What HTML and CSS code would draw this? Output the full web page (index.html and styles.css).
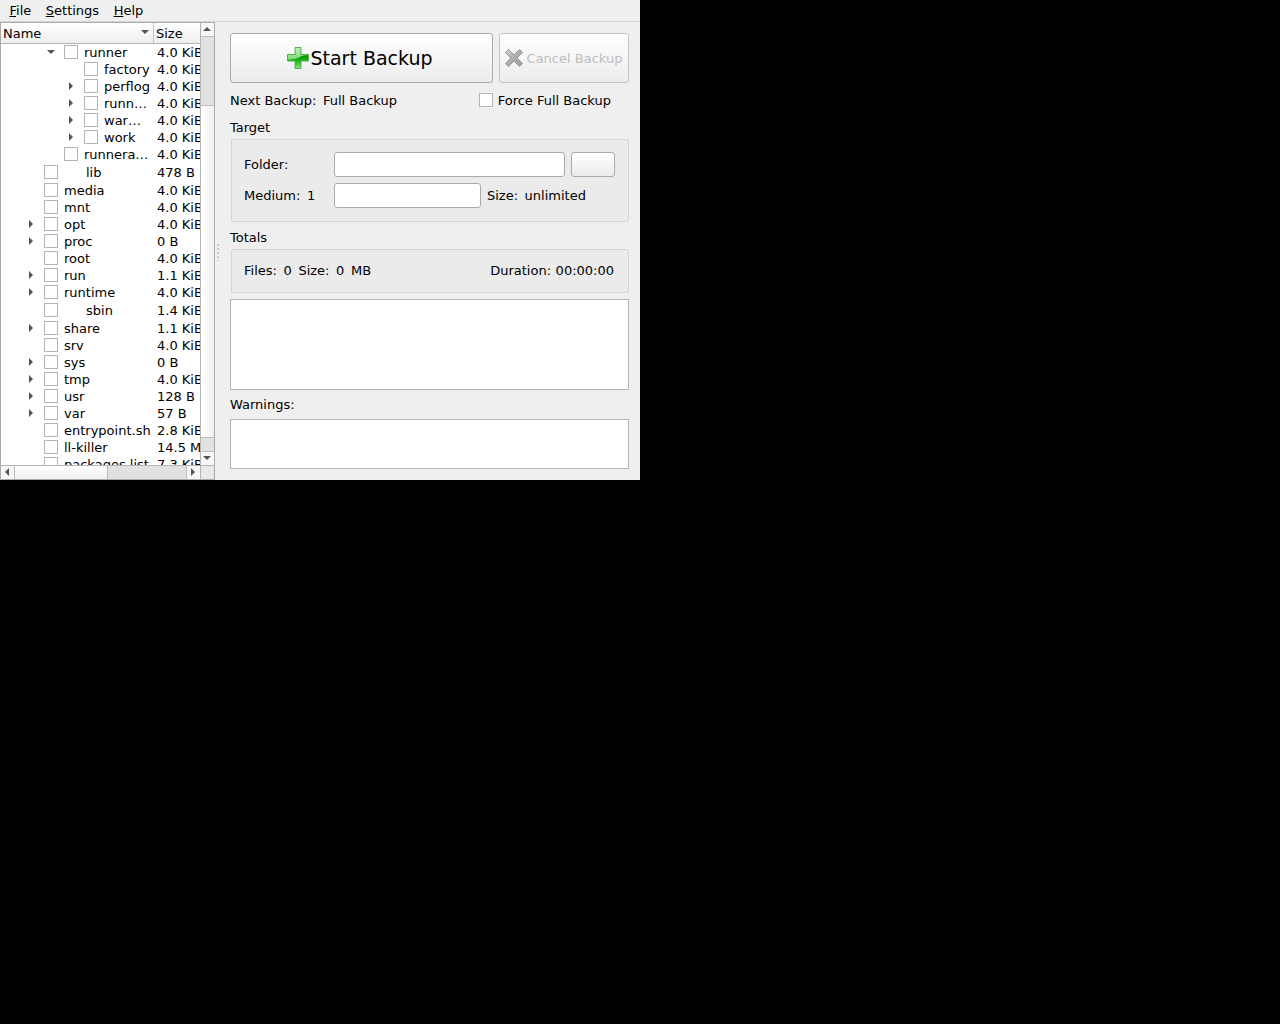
FILE: index.html
```html
<!DOCTYPE html>
<html lang="en">
<head>
<meta charset="utf-8">
<title>Backup</title>
<link rel="stylesheet" href="styles.css">
</head>
<body>
<div class="window">
  <nav class="menubar"><span><u>F</u>ile</span><span><u>S</u>ettings</span><span><u>H</u>elp</span></nav>
  <div class="main">
    <section class="tree">
      <div class="tree-body">
        <div class="list">
          <div class="head"><div class="h-name">Name<i class="tri down sort"></i></div><div class="h-size">Size</div></div>
          <div class="rows">
            <div class="row d2"><i class="tri down"></i><b class="check"></b><span class="name">runner</span><span class="size">4.0 KiB</span></div>
            <div class="row d3"><i class="tri none"></i><b class="check"></b><span class="name">factory</span><span class="size">4.0 KiB</span></div>
            <div class="row d3"><i class="tri right"></i><b class="check"></b><span class="name">perflog</span><span class="size">4.0 KiB</span></div>
            <div class="row d3"><i class="tri right"></i><b class="check"></b><span class="name">runn…</span><span class="size">4.0 KiB</span></div>
            <div class="row d3"><i class="tri right"></i><b class="check"></b><span class="name">war…</span><span class="size">4.0 KiB</span></div>
            <div class="row d3"><i class="tri right"></i><b class="check"></b><span class="name">work</span><span class="size">4.0 KiB</span></div>
            <div class="row d2"><i class="tri none"></i><b class="check"></b><span class="name">runnera…</span><span class="size">4.0 KiB</span></div>
            <div class="row d1 link"><i class="tri none"></i><b class="check"></b><span class="name">lib</span><span class="size">478 B</span></div>
            <div class="row d1"><i class="tri none"></i><b class="check"></b><span class="name">media</span><span class="size">4.0 KiB</span></div>
            <div class="row d1"><i class="tri none"></i><b class="check"></b><span class="name">mnt</span><span class="size">4.0 KiB</span></div>
            <div class="row d1"><i class="tri right"></i><b class="check"></b><span class="name">opt</span><span class="size">4.0 KiB</span></div>
            <div class="row d1"><i class="tri right"></i><b class="check"></b><span class="name">proc</span><span class="size">0 B</span></div>
            <div class="row d1"><i class="tri none"></i><b class="check"></b><span class="name">root</span><span class="size">4.0 KiB</span></div>
            <div class="row d1"><i class="tri right"></i><b class="check"></b><span class="name">run</span><span class="size">1.1 KiB</span></div>
            <div class="row d1"><i class="tri right"></i><b class="check"></b><span class="name">runtime</span><span class="size">4.0 KiB</span></div>
            <div class="row d1 link"><i class="tri none"></i><b class="check"></b><span class="name">sbin</span><span class="size">1.4 KiB</span></div>
            <div class="row d1"><i class="tri right"></i><b class="check"></b><span class="name">share</span><span class="size">1.1 KiB</span></div>
            <div class="row d1"><i class="tri none"></i><b class="check"></b><span class="name">srv</span><span class="size">4.0 KiB</span></div>
            <div class="row d1"><i class="tri right"></i><b class="check"></b><span class="name">sys</span><span class="size">0 B</span></div>
            <div class="row d1"><i class="tri right"></i><b class="check"></b><span class="name">tmp</span><span class="size">4.0 KiB</span></div>
            <div class="row d1"><i class="tri right"></i><b class="check"></b><span class="name">usr</span><span class="size">128 B</span></div>
            <div class="row d1"><i class="tri right"></i><b class="check"></b><span class="name">var</span><span class="size">57 B</span></div>
            <div class="row d1"><i class="tri none"></i><b class="check"></b><span class="name">entrypoint.sh</span><span class="size">2.8 KiB</span></div>
            <div class="row d1"><i class="tri none"></i><b class="check"></b><span class="name">ll-killer</span><span class="size">14.5 MiB</span></div>
            <div class="row d1"><i class="tri none"></i><b class="check"></b><span class="name">packages.list</span><span class="size">7.3 KiB</span></div>
          </div>
        </div>
        <div class="vbar">
          <div class="arrow"><i class="tri up"></i></div>
          <div class="groove before"></div>
          <div class="thumb"></div>
          <div class="groove after"></div>
          <div class="arrow"><i class="tri down"></i></div>
        </div>
      </div>
      <div class="hbar">
        <div class="arrow"><i class="tri left"></i></div>
        <div class="thumb"></div>
        <div class="groove"></div>
        <div class="arrow"><i class="tri right"></i></div>
        <div class="corner"></div>
      </div>
    </section>
    <div class="splitter"></div>
    <section class="panel">
      <div class="actions">
        <button class="btn start">
          <svg width="24" height="24" viewBox="0 0 24 24">
            <defs>
              <linearGradient id="pt" x1="0" y1="0" x2="0" y2="1"><stop offset="0" stop-color="#c4edc0"/><stop offset="1" stop-color="#7fd777"/></linearGradient>
              <linearGradient id="pb" x1="0" y1="0" x2="0" y2="1"><stop offset="0" stop-color="#5fbf58"/><stop offset=".42" stop-color="#0a9c05"/><stop offset=".65" stop-color="#22b818"/><stop offset="1" stop-color="#8fe086"/></linearGradient>
            </defs>
            <path d="M9 1.500h6v7h7.500v6.500h-7.500v7.500h-6v-7.500h-7.500v-6.500h7.500z" fill="url(#pb)" stroke="#58b052" stroke-linejoin="round"/>
            <path d="M9.500 2h5v7h7q-5 .2-7 1.500q-4 2.800-12.500 3v-4.500h7.500z" fill="url(#pt)"/>
          </svg><span>Start Backup</span>
        </button>
        <button class="btn cancel">
          <svg width="20" height="20" viewBox="0 0 20 20">
            <defs><linearGradient id="cx" x1="0" y1="0" x2="1" y2="1"><stop offset="0" stop-color="#d2d2d2"/><stop offset=".5" stop-color="#aeaeae"/><stop offset="1" stop-color="#a0a0a0"/></linearGradient></defs>
            <path d="M4.500 1.500L10 7l5.500-5.500 3 3L13 10l5.500 5.500-3 3L10 13l-5.500 5.500-3-3L7 10 1.500 4.500z" fill="url(#cx)" stroke="#929292" stroke-linejoin="round"/>
          </svg><span>Cancel Backup</span>
        </button>
      </div>
      <div class="next"><span>Next Backup:</span><span class="grow">Full Backup</span><b class="check"></b><span class="force">Force Full Backup</span></div>
      <div class="title">Target</div>
      <div class="group target">
        <div class="line"><span class="label">Folder:</span><div class="input folder"></div><div class="btn browse"></div></div>
        <div class="line"><span class="label">Medium:<span class="num">1</span></span><div class="input medium"></div><span class="lim">Size:</span><span>unlimited</span></div>
      </div>
      <div class="title totals-title">Totals</div>
      <div class="group totals"><span>Files:</span><span>0</span><span>Size:</span><span>0</span><span class="grow">MB</span><span class="dur">Duration:</span><span>00:00:00</span></div>
      <div class="box log"></div>
      <div class="title warn-title">Warnings:</div>
      <div class="box warn"></div>
    </section>
  </div>
</div>
</body>
</html>
```
FILE: styles.css
```css
* { box-sizing: border-box; }
body { margin: 0; background: #000; font: 13px/17px "DejaVu Sans", sans-serif; color: #000; }
.window { width: 640px; height: 480px; background: #efefef; display: flex; flex-direction: column; overflow: hidden; white-space: nowrap; }
.menubar { height: 22px; flex: none; display: flex; gap: 14.500px; padding: 2px 0 0 9.500px; border-bottom: 1px solid #d4d4d4; }
.menubar u { text-underline-offset: 1px; text-decoration-thickness: 1px; }
.main { flex: 1; display: flex; min-height: 0; }

.tree { width: 215px; flex: none; border: 1px solid #ababab; background: #fff; display: flex; flex-direction: column; }
.tree-body { flex: 1; display: flex; min-height: 0; }
.list { width: 199px; flex: none; display: flex; flex-direction: column; overflow: hidden; }
.head { height: 21px; flex: none; display: flex; line-height: 21px; background: linear-gradient(#fff, #eee); border-bottom: 1px solid #b4b4b4; }
.h-name { width: 153px; padding: 0 4px 0 2px; border-right: 1px solid #c6c6c6; display: flex; justify-content: space-between; }
.h-size { padding-left: 2px; }
.sort { margin-top: 7px; }
.rows { flex: 1; min-height: 0; overflow: hidden; }
.row { height: 17px; display: flex; }
.row.link { height: 19px; line-height: 19px; }
.d1 { padding-left: 25px; }
.d2 { padding-left: 45px; }
.d3 { padding-left: 65px; }
.row .tri { margin: 4px 0 0 1px; }
.row .tri.down { margin-top: 6px; }
.row .check { margin: 1px 6px 0 9px; }
.row .tri.right { margin-left: 3px; }
.row .tri.right + .check { margin-left: 11px; }
.row .tri.none { width: 8px; }
.link .check { margin-top: 2px; }
.link .name { padding-left: 22px; }
.name { flex: 1; }
.size { width: 43px; flex: none; }
.check { width: 14px; height: 14px; flex: none; background: #fff; border: 1px solid #b4b4b4; }

.tri { width: 0; height: 0; flex: none; border: 0 solid transparent; }
.tri.down { border-width: 4px 4px 0; border-top-color: #555; }
.tri.up { border-width: 0 4px 4px; border-bottom-color: #555; }
.tri.right { border-width: 4px 0 4px 4px; border-left-color: #555; }
.tri.left { border-width: 4px 4px 4px 0; border-right-color: #555; }

.vbar { width: 14px; border-left: 1px solid #b4b4b4; display: flex; flex-direction: column; }
.arrow { width: 13px; height: 13px; flex: none; display: flex; align-items: center; justify-content: center; background: #f7f7f7; padding: 0 1px 1px 0; }
.vbar .groove { background: #e1e1e1; border: solid #bcbcbc; border-width: 1px 0; }
.before { height: 70px; }
.after { height: 15px; }
.vbar .thumb { flex: 1; background: linear-gradient(90deg, #fff, #f0f0f0); }
.hbar { height: 14px; flex: none; display: flex; border-top: 1px solid #b4b4b4; }
.hbar .thumb { width: 93px; border-left: 1px solid #bcbcbc; background: linear-gradient(#fff, #f0f0f0); }
.hbar .groove { flex: 1; background: #e1e1e1; border: solid #bcbcbc; border-width: 0 1px; }
.corner { width: 14px; border-left: 1px solid #b4b4b4; background: #e9e9e9; }
.splitter { width: 2px; height: 17px; margin: 222px 0 0 2px; background: radial-gradient(circle at 1px 1px, #c8c8c8 0.7px, transparent 0.8px) 0 0 / 2px 4px; }

.panel { flex: 1; padding: 11px 11px 0; display: flex; flex-direction: column; }
.actions { height: 50px; display: flex; gap: 6px; }
.btn { border: 1px solid #ababab; border-radius: 3px; background: linear-gradient(#fff, #ececec); padding: 0; font: inherit; display: flex; align-items: center; justify-content: center; }
.start { width: 263px; font-size: 19px; color: #000; }
.start span { padding-right: 4px; }
.cancel { width: 130px; border-color: #c3c3c3; color: #bebebe; gap: 3px; padding-right: 2px; }
.next { height: 17px; margin-top: 9px; display: flex; gap: 6.500px; }
.next .check { margin-top: 1px; }
.next .force { margin: 0 18px 0 -1.500px; }
.grow { flex: 1; }
.title { height: 17px; margin-top: 10px; }
.group { margin: 3px 0 0 1px; border: 1px solid #d4d4d4; border-radius: 2px; background: #ebebeb; padding: 12px; }
.target { height: 83px; display: flex; flex-direction: column; gap: 6px; }
.line { display: flex; align-items: center; height: 25px; }
.label { width: 90px; }
.num { margin-left: 6.500px; }
.input { height: 25px; background: #fff; border: 1px solid #ababab; border-radius: 3px; }
.folder { width: 231px; margin-right: 6px; }
.browse { width: 44px; height: 25px; }
.medium { width: 147px; margin-right: 6px; }
.lim { margin-right: 6.500px; }
.totals-title { margin-top: 7px; }
.totals { height: 44px; display: flex; gap: 6.600px; padding-right: 14px; }
.totals .dur { margin-right: -2px; }
.box { background: #fff; border: 1px solid #b4b4b4; }
.log { height: 91px; margin-top: 6px; }
.warn-title { margin-top: 6px; }
.warn { height: 50px; margin-top: 6px; }
```
